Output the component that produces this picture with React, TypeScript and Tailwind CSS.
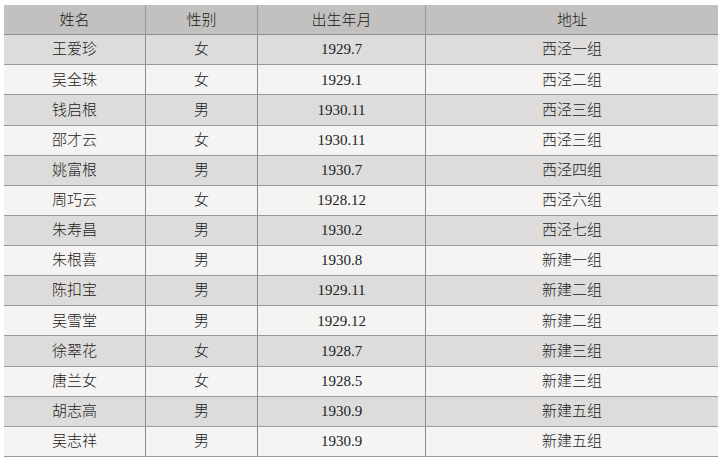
import React from "react";

const rows: [string, string, string, string][] = [
  ["王爱珍", "女", "1929.7", "西泾一组"],
  ["吴全珠", "女", "1929.1", "西泾二组"],
  ["钱启根", "男", "1930.11", "西泾三组"],
  ["邵才云", "女", "1930.11", "西泾三组"],
  ["姚富根", "男", "1930.7", "西泾四组"],
  ["周巧云", "女", "1928.12", "西泾六组"],
  ["朱寿昌", "男", "1930.2", "西泾七组"],
  ["朱根喜", "男", "1930.8", "新建一组"],
  ["陈扣宝", "男", "1929.11", "新建二组"],
  ["吴雪堂", "男", "1929.12", "新建二组"],
  ["徐翠花", "女", "1928.7", "新建三组"],
  ["唐兰女", "女", "1928.5", "新建三组"],
  ["胡志高", "男", "1930.9", "新建五组"],
  ["吴志祥", "男", "1930.9", "新建五组"],
];

const serif = "font-['Liberation_Serif','Noto_Sans_CJK_SC',serif]";

export default function App() {
  return (
    <div className="w-[721px] h-[461px] bg-white pt-[5px] pl-[4px]">
      <div className="w-[714px] text-[15px] text-[#222]">
        <div className="grid grid-cols-[142px_112px_168px_292px] h-[30.13px] bg-[#c2c1bf] border-b border-[#8c8c8c] font-['Noto_Sans_CJK_SC',sans-serif] font-light text-[#1a1a1a]">
          {["姓名", "性别", "出生年月", "地址"].map((h, i) => (
            <div
              key={h}
              className={`flex items-center justify-center ${i < 3 ? "border-r border-[#9a9a9a]" : ""}`}
            >
              {h}
            </div>
          ))}
        </div>
        {rows.map((r, idx) => (
          <div
            key={idx}
            className={`grid grid-cols-[142px_112px_168px_292px] h-[30.13px] border-b border-[#9a9a9a] font-light ${serif} ${idx % 2 === 0 ? "bg-[#dddcdb]" : "bg-[#f5f4f2]"}`}
          >
            {r.map((c, i) => (
              <div
                key={i}
                className={`flex items-center justify-center ${i < 3 ? "border-r border-[#8c8c8c]" : ""}`}
              >
                {c}
              </div>
            ))}
          </div>
        ))}
      </div>
    </div>
  );
}
